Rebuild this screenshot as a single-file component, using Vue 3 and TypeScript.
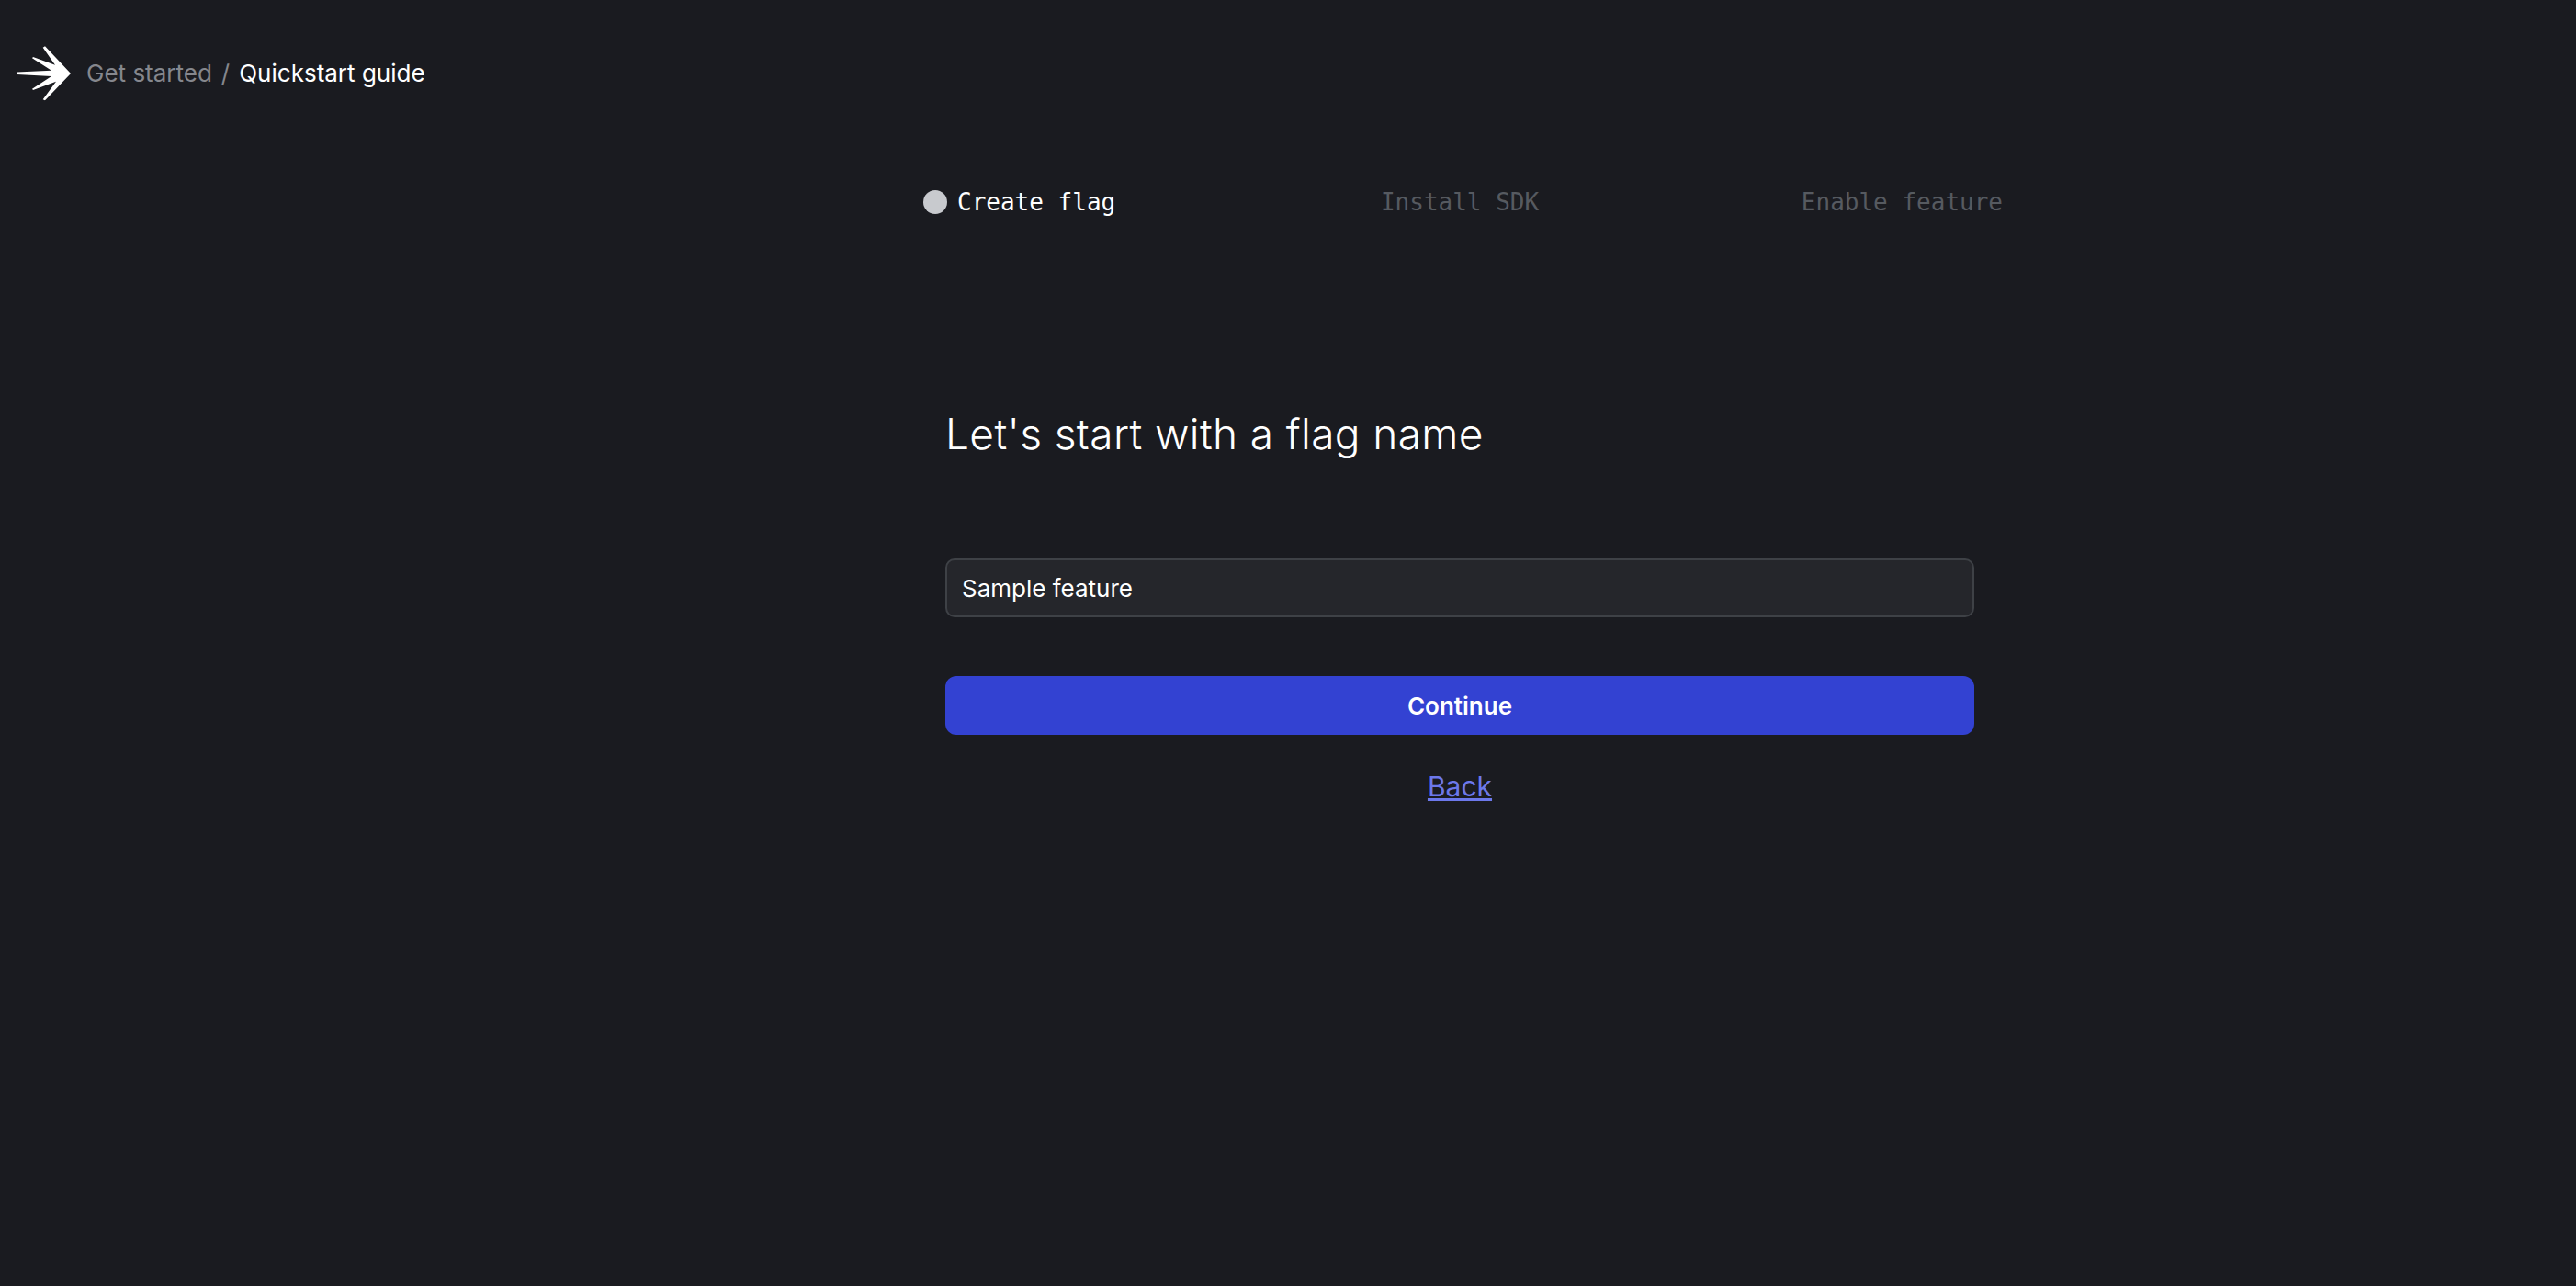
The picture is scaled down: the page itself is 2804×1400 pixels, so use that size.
<script setup lang="ts">
const steps: { label: string; active: boolean }[] = [
  { label: 'Create flag', active: true },
  { label: 'Install SDK', active: false },
  { label: 'Enable feature', active: false },
]
</script>

<template>
  <div class="page">
    <header class="topbar">
      <svg class="logo" width="60" height="60" viewBox="18 50 60 60" aria-hidden="true">
        <path
          fill="#fff"
          d="M77 80 L49 50.3 L46.7 51.7 L60 70.7 L36 62 L35 63.3 L56 76.7 L18.3 78.5 L18.3 81 L56 82.9 L35 96.7 L36 98 L61 88.7 L46.7 108.3 L49 109.3 Z"
        />
      </svg>
      <nav class="crumbs">
        <span class="muted">Get started</span>
        <span class="muted sep">/</span>
        <span class="current">Quickstart guide</span>
      </nav>
    </header>

    <main class="main">
      <div class="steps">
        <div v-for="s in steps" :key="s.label" class="step" :class="{ active: s.active }">
          <span v-if="s.active" class="dot"></span>
          <span>{{ s.label }}</span>
        </div>
      </div>

      <form class="form" @submit.prevent>
        <h1 class="title">Let's start with a flag name</h1>
        <input class="field" type="text" value="Sample feature" />
        <button class="submit" type="submit">Continue</button>
        <a class="back" href="#">Back</a>
      </form>
    </main>
  </div>
</template>

<style scoped>
.page {
  min-height: 1400px;
  background: #1a1b20;
  color: #fff;
  font-family: Inter, "Noto Sans", sans-serif;
  box-sizing: border-box;
}
.topbar {
  display: flex;
  align-items: center;
  gap: 16px;
  padding: 50px 18px 0;
  height: 60px;
}
.logo {
  flex: none;
}
.crumbs {
  display: flex;
  gap: 10px;
  font-size: 26px;
  line-height: 60px;
}
.muted {
  color: #85878d;
}
.current {
  color: #fff;
}
.main {
  display: flex;
  flex-direction: column;
  align-items: center;
  padding-left: 374px;
}
.steps {
  display: flex;
  justify-content: space-between;
  width: 1175px;
  margin-top: 90px;
  margin-left: 7px;
  font-family: "DejaVu Sans Mono", monospace;
  font-size: 26px;
  line-height: 40px;
  color: #565a60;
}
.step {
  display: flex;
  align-items: center;
  gap: 11px;
}
.step:nth-child(2) {
  margin-left: 3px;
}
.step.active {
  color: #fff;
}
.dot {
  width: 26px;
  height: 26px;
  border-radius: 50%;
  background: #c8cace;
}
.form {
  display: flex;
  flex-direction: column;
  align-items: center;
  width: 1120px;
  margin-top: 200px;
}
.title {
  align-self: flex-start;
  margin: 0 0 104px;
  font-size: 46px;
  line-height: 64px;
  font-weight: 350;
  letter-spacing: 0.38px;
  color: #fff;
}
.field {
  box-sizing: border-box;
  width: 100%;
  height: 64px;
  padding: 0 16px;
  border: 2px solid #3e4146;
  border-radius: 10px;
  background: #25262b;
  color: #fff;
  font: 400 26px Inter, sans-serif;
  outline: none;
}
.submit {
  width: 100%;
  height: 64px;
  margin-top: 64px;
  border: 0;
  border-radius: 12px;
  background: #3342d2;
  color: #fff;
  font: 600 26px Inter, sans-serif;
}
.back {
  margin-top: 36px;
  color: #6c78eb;
  font-size: 30px;
  line-height: 40px;
  text-decoration: underline;
}
</style>

<style>
html,
body {
  background: #1a1b20;
}
</style>
